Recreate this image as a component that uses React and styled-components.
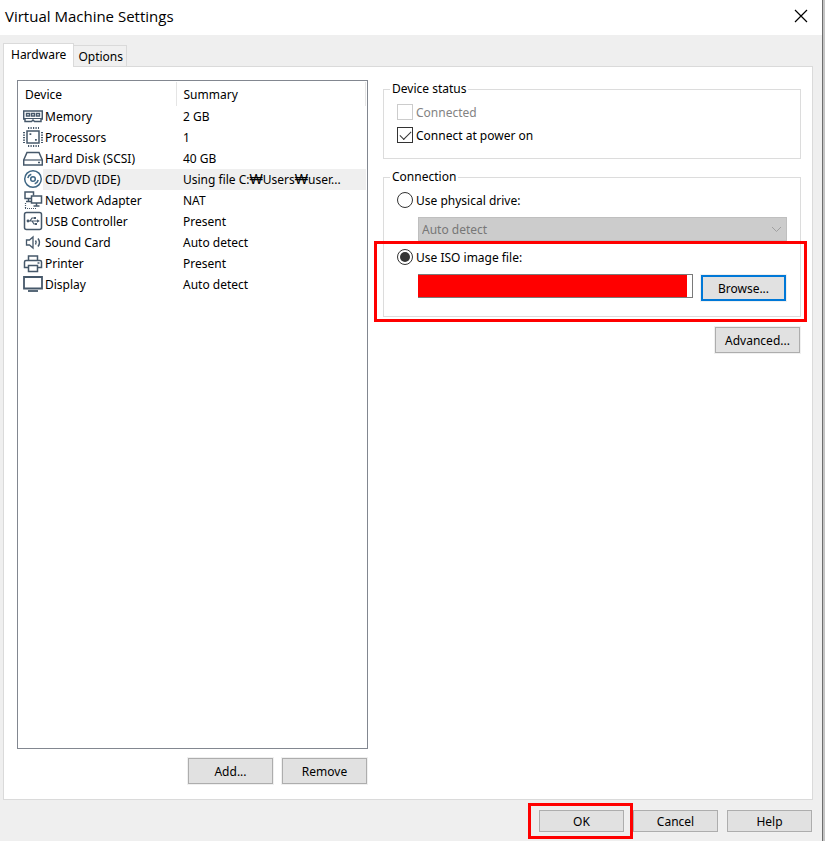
import { useState } from "react";
import styled, { createGlobalStyle } from "styled-components";

const GlobalStyle = createGlobalStyle`
  * {
    box-sizing: border-box;
  }

  body {
    margin: 0;
    background: #c4c4c4;
    color: #000;
    font-family: "Noto Sans", "Noto Sans CJK KR", sans-serif;
    font-size: 12px;
    line-height: 16px;
  }
`;

const Window = styled.div`
  display: flex;
  flex-direction: column;
  min-height: 100vh;
  margin-right: 2px;
  border-right: 1px solid #6e6e6e;
  background: #efefef;
`;

const TitleBar = styled.header`
  display: flex;
  align-items: center;
  justify-content: space-between;
  height: 35px;
  padding: 0 14px 3px 5px;
  background: #fff;
`;

const Title = styled.h1`
  margin: 0;
  font-family: "Open Sans", "Noto Sans", sans-serif;
  font-size: 15px;
  font-weight: 400;
  line-height: 20px;
`;

const CloseButton = styled.button`
  display: flex;
  padding: 0;
  border: none;
  background: transparent;
`;

const Tabs = styled.div`
  display: flex;
  align-items: flex-end;
  padding: 8px 0 0 3px;
`;

const Tab = styled.button`
  position: relative;
  height: ${(p) => (p.$active ? 24 : 21)}px;
  margin-bottom: ${(p) => (p.$active ? -1 : 0)}px;
  padding: ${(p) => (p.$active ? "0 7px 2px" : "2px 3px 0 4px")};
  border: 1px solid #dadada;
  border-left-width: ${(p) => (p.$active ? 1 : 0)}px;
  border-bottom: none;
  background: ${(p) => (p.$active ? "#fff" : "#f0f0f0")};
  color: inherit;
  font: inherit;
`;

const Panel = styled.main`
  flex: 1;
  display: grid;
  grid-template-columns: minmax(0, 351fr) minmax(0, 418fr);
  gap: 15px;
  margin: 0 9px 0 3px;
  padding: 13px 11px 14px 13px;
  border: 1px solid #dadada;
  background: #fff;
`;

const DeviceColumn = styled.div`
  display: flex;
  flex-direction: column;
  gap: 8px;
`;

const DeviceList = styled.div`
  flex: 1;
  padding: 1px 1px 0 0;
  border: 1px solid #828790;
`;

const DeviceTable = styled.table`
  width: 100%;
  border-collapse: collapse;
  table-layout: fixed;
`;

const HeadCell = styled.th`
  width: ${(p) => p.$width || "auto"};
  height: 24px;
  padding: 2px 6px 0 7px;
  border-right: 1px solid #e5e5e5;
  font-weight: 400;
  text-align: left;
`;

const DeviceCell = styled.td`
  padding: 0 0 0 5px;
`;

const DeviceName = styled.div`
  display: flex;
  height: 21px;
`;

const DeviceLabel = styled.span`
  flex: 1;
  padding-left: 2px;
  background: ${(p) => (p.$selected ? "#efefef" : "transparent")};
  line-height: 21px;
`;

const SummaryCell = styled.td`
  padding: 0 0 0 7px;
  background: ${(p) => (p.$selected ? "#efefef" : "transparent")};
  line-height: 21px;
  white-space: nowrap;
`;

const Won = styled.span`
  font-family: "Liberation Sans", sans-serif;
  font-size: 14px;
  line-height: 16px;
`;

const ButtonRow = styled.div`
  display: flex;
  justify-content: flex-end;
  gap: 7px;
`;

const Button = styled.button`
  width: 85px;
  height: 26px;
  margin: 1px;
  padding: 2px 0 0;
  border: ${(p) => (p.$focused ? "2px solid #0078d7" : "1px solid #adadad")};
  background: #e1e1e1;
  box-shadow: 0 0 0 1px #f0f0f0;
  color: inherit;
  font: inherit;
`;

const FooterButton = styled(Button)`
  height: 22px;
  margin: 0;
`;

const Settings = styled.div`
  display: flex;
  flex-direction: column;
  padding-top: 1px;
`;

const Group = styled.fieldset`
  min-width: 0;
  margin: 0 0 ${(p) => p.$gap}px;
  padding: 4px 13px ${(p) => p.$bottom}px;
  border: 1px solid #dcdcdc;
`;

const Legend = styled.legend`
  margin-left: -7px;
  padding: 0 2px;
`;

const Option = styled.label`
  display: flex;
  align-items: center;
  gap: 3px;
  height: 23px;
  color: ${(p) => (p.$disabled ? "#838383" : "inherit")};
`;

const Checkbox = styled.input`
  appearance: none;
  display: grid;
  place-items: center;
  width: 16px;
  height: 16px;
  margin: 0 0 1px;
  border: 1px solid #333;
  background: #fff;

  &:disabled {
    border-color: #ccc;
  }

  &:checked::before {
    content: "";
    width: 10px;
    height: 5px;
    margin-bottom: 3px;
    border: solid #333;
    border-width: 0 0 1px 1px;
    transform: rotate(-45deg);
  }
`;

const Radio = styled(Checkbox)`
  border-radius: 50%;

  &:checked::before {
    height: 10px;
    margin: 0;
    border: none;
    border-radius: 50%;
    background: #333;
    transform: none;
  }
`;

const DriveField = styled.div`
  position: relative;
  margin: 5px 0 5px 21px;
`;

const DriveSelect = styled.select`
  appearance: none;
  display: block;
  width: 100%;
  height: 24px;
  padding: 2px 3px 0;
  border: 1px solid #bfbfbf;
  border-radius: 0;
  background: #ccc;
  color: #777;
  font: inherit;
  opacity: 1;
`;

const Chevron = styled.svg`
  position: absolute;
  top: 9px;
  right: 5px;
`;

const IsoSection = styled.div`
  position: relative;

  &::after {
    content: "";
    position: absolute;
    inset: -5px -20px -20px -23px;
    border: 3px solid #f00;
    pointer-events: none;
  }
`;

const PathRow = styled.div`
  display: flex;
  gap: 7px;
  margin: 5px 0 0 21px;
`;

const PathField = styled.div`
  position: relative;
  flex: 1;
`;

const PathInput = styled.input`
  display: block;
  width: 100%;
  height: 24px;
  border: 1px solid #7a7a7a;
  font: inherit;
`;

const Redaction = styled.span`
  position: absolute;
  inset: 1px 6px 1px 0;
  height: 22px;
  background: #f00;
`;

const Footer = styled.footer`
  display: flex;
  justify-content: flex-end;
  gap: 9px;
  padding: 10px 10px 9px;
`;

const Marked = styled.div`
  position: relative;

  &::after {
    content: "";
    position: absolute;
    inset: -7px -9px -7px -11px;
    border: 3px solid #f00;
    pointer-events: none;
  }
`;

const icons = {
  memory: (
    <>
      <path d="M.7 5h18.600v8h-1.300v2.500h-6.500l-1.500-1.500-1.500 1.500H2V13H.7z" />
      <path d="M3.500 7.500h3v2.500h-3zM8.500 7.500h3v2.500h-3zM13.500 7.500h3v2.500h-3z" strokeWidth="1.4" />
      <path d="M1 12.500h18" strokeWidth="1" />
    </>
  ),
  processor: (
    <>
      <rect x="4" y="4" width="12" height="12" />
      <path d="M5 1h11M5 19h11M1 5v11M19 5v11" strokeWidth="2" strokeDasharray="1.2 1.3" />
      <path d="M6.500 7.200h1.800M12 12.800h1.800" strokeWidth="1.8" />
    </>
  ),
  disk: (
    <>
      <path d="M4 4.500h12l3.300 7.500v5H.7v-5z" />
      <path d="M.7 12h18.600" strokeWidth="1.2" />
      <path d="M15 14.500h2" />
    </>
  ),
  disc: (
    <g stroke="#3f6785">
      <circle cx="10" cy="10" r="8.3" />
      <circle cx="10" cy="10" r="2.3" />
      <path d="M4.800 9a5.300 5.300 0 0 1 3.500-3.800M15.200 11a5.300 5.300 0 0 1-3.500 3.800" />
    </g>
  ),
  network: (
    <>
      <path d="M8.500 8.500h-6.500V2h8.500v3.500M5.500 9v2.500M3 11.500h5" />
      <path d="M8.500 6h10v7h-10zM13.500 13v2.500M10.500 16h6" />
      <path d="M2.500 13v5.500M2 18.500h12" strokeWidth="1.2" strokeDasharray="1 1" />
    </>
  ),
  usb: (
    <>
      <rect x="1.500" y="1.500" width="17" height="17" rx="2" />
      <path d="M5 10h9.500M7 10l2-3h2M9 10l2 3h2" strokeWidth="1.2" />
      <circle cx="5" cy="10" r="1.4" fill="#46586a" stroke="none" />
      <path d="M14 8.200l2.800 1.800-2.800 1.800zM11 6h2v2h-2zM12 12h2v2h-2z" fill="#46586a" stroke="none" />
    </>
  ),
  sound: (
    <>
      <path d="M3.500 8h3L10 5v11l-3.500-3h-3z" strokeWidth="1.3" />
      <path d="M12.500 8.500q1.500 2 0 4M15 6.500q3 4 0 8" />
    </>
  ),
  printer: (
    <>
      <path d="M5.500 7.500V3h9v4.500" />
      <path d="M5.500 14.500h-4V9q0-1.500 1.500-1.500h14q1.500 0 1.500 1.500v5.500h-4" />
      <path d="M5.500 12.500h9v6h-9z" />
      <path d="M14.500 10h2" />
    </>
  ),
  display: (
    <>
      <path d="M1 3h18v11.500H1z" strokeWidth="1.8" />
      <path d="M5 17h10" strokeWidth="1.8" />
    </>
  ),
};

const devices = [
  { name: "Memory", summary: "2 GB", icon: "memory" },
  { name: "Processors", summary: "1", icon: "processor" },
  { name: "Hard Disk (SCSI)", summary: "40 GB", icon: "disk" },
  {
    name: "CD/DVD (IDE)",
    summary: (
      <>
        Using file C:<Won>₩</Won>Users<Won>₩</Won>user...
      </>
    ),
    icon: "disc",
  },
  { name: "Network Adapter", summary: "NAT", icon: "network" },
  { name: "USB Controller", summary: "Present", icon: "usb" },
  { name: "Sound Card", summary: "Auto detect", icon: "sound" },
  { name: "Printer", summary: "Present", icon: "printer" },
  { name: "Display", summary: "Auto detect", icon: "display" },
];

function DeviceIcon({ name }) {
  return (
    <svg
      width="20"
      height="21"
      viewBox="0 0 20 21"
      fill="none"
      stroke="#46586a"
      strokeWidth="1.5"
      aria-hidden="true"
    >
      {icons[name]}
    </svg>
  );
}

export default function App() {
  const [tab, setTab] = useState("Hardware");
  const [selected, setSelected] = useState("CD/DVD (IDE)");
  const [powerOn, setPowerOn] = useState(true);
  const [source, setSource] = useState("iso");

  return (
    <>
      <GlobalStyle />
      <Window>
        <TitleBar>
          <Title>Virtual Machine Settings</Title>
          <CloseButton aria-label="Close">
            <svg width="14" height="14" viewBox="0 0 14 14" stroke="#000" strokeWidth="1.2">
              <path d="M1 1l12 12M13 1L1 13" />
            </svg>
          </CloseButton>
        </TitleBar>

        <Tabs role="tablist">
          {["Hardware", "Options"].map((name) => (
            <Tab
              key={name}
              role="tab"
              aria-selected={tab === name}
              $active={tab === name}
              onClick={() => setTab(name)}
            >
              {name}
            </Tab>
          ))}
        </Tabs>

        <Panel>
          <DeviceColumn>
            <DeviceList>
              <DeviceTable>
                <thead>
                  <tr>
                    <HeadCell $width="158px">Device</HeadCell>
                    <HeadCell>Summary</HeadCell>
                  </tr>
                </thead>
                <tbody>
                  {devices.map((device) => (
                    <tr key={device.name} onClick={() => setSelected(device.name)}>
                      <DeviceCell>
                        <DeviceName>
                          <DeviceIcon name={device.icon} />
                          <DeviceLabel $selected={selected === device.name}>
                            {device.name}
                          </DeviceLabel>
                        </DeviceName>
                      </DeviceCell>
                      <SummaryCell $selected={selected === device.name}>
                        {device.summary}
                      </SummaryCell>
                    </tr>
                  ))}
                </tbody>
              </DeviceTable>
            </DeviceList>
            <ButtonRow>
              <Button>Add...</Button>
              <Button>Remove</Button>
            </ButtonRow>
          </DeviceColumn>

          <Settings>
            <Group $gap={10} $bottom={11}>
              <Legend>Device status</Legend>
              <Option $disabled>
                <Checkbox type="checkbox" disabled />
                Connected
              </Option>
              <Option>
                <Checkbox
                  type="checkbox"
                  checked={powerOn}
                  onChange={(e) => setPowerOn(e.target.checked)}
                />
                Connect at power on
              </Option>
            </Group>

            <Group $gap={9} $bottom={14}>
              <Legend>Connection</Legend>
              <Option>
                <Radio
                  type="radio"
                  name="source"
                  checked={source === "physical"}
                  onChange={() => setSource("physical")}
                />
                Use physical drive:
              </Option>
              <DriveField>
                <DriveSelect aria-label="Physical drive" disabled={source !== "physical"}>
                  <option>Auto detect</option>
                </DriveSelect>
                <Chevron width="11" height="7" viewBox="0 0 11 7" fill="none" stroke="#a0a0a0">
                  <path d="M1 1l4.500 4.500L10 1" />
                </Chevron>
              </DriveField>
              <IsoSection>
                <Option>
                  <Radio
                    type="radio"
                    name="source"
                    checked={source === "iso"}
                    onChange={() => setSource("iso")}
                  />
                  Use ISO image file:
                </Option>
                <PathRow>
                  <PathField>
                    <PathInput type="text" aria-label="ISO image file" />
                    <Redaction />
                  </PathField>
                  <Button $focused>Browse...</Button>
                </PathRow>
              </IsoSection>
            </Group>

            <ButtonRow>
              <Button>Advanced...</Button>
            </ButtonRow>
          </Settings>
        </Panel>

        <Footer>
          <Marked>
            <FooterButton>OK</FooterButton>
          </Marked>
          <FooterButton>Cancel</FooterButton>
          <FooterButton>Help</FooterButton>
        </Footer>
      </Window>
    </>
  );
}
